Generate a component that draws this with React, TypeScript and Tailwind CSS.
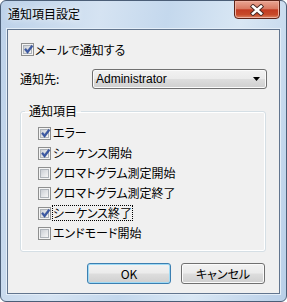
import React from 'react';

const btnBg = 'bg-[linear-gradient(#f2f2f2_0%,#ebebeb_48%,#dddddd_52%,#cfcfcf_100%)]';

const CheckBox: React.FC<{ checked?: boolean }> = ({ checked }) => (
    <span className="relative block w-[13px] h-[13px] shrink-0 border border-[#8e8f8f] bg-[#f4f4f4] p-[1px]">
        <span className="block w-full h-full border border-[#aeb3b9] bg-[linear-gradient(135deg,#cbcfd5,#f6f6f6)]" />
        {checked && (
            <svg className="absolute left-[1px] top-[0px]" width="11" height="11" viewBox="0 0 11 11">
                <path d="M1.5 5.6 L3 4.4 L4.5 6.4 L8.6 1.2 L10 2.3 L4.6 9.4 Z" fill="#3c5aa6" stroke="#1f3a82" strokeWidth="0.5" />
            </svg>
        )}
    </span>
);

const Item: React.FC<{ label: string; checked?: boolean; focused?: boolean }> = ({ label, checked, focused }) => (
    <div className="flex items-center h-[20px]">
        <CheckBox checked={checked} />
        <span className={`ml-[1px] leading-[14px] border ${focused ? 'border-dotted border-black' : 'border-transparent'}`}>{label}</span>
    </div>
);

const items = [
    { label: 'エラー', checked: true },
    { label: 'シーケンス開始', checked: true },
    { label: 'クロマトグラム測定開始', checked: false },
    { label: 'クロマトグラム測定終了', checked: false },
    { label: 'シーケンス終了', checked: true, focused: true },
    { label: 'エンドモード開始', checked: false },
];

export default function App() {
    return (
        <div className="w-[287px] h-[302px] rounded-[6px] border border-[#4b5e77] bg-[linear-gradient(100deg,#bcd1e9_0%,#d5e3f2_30%,#c4d8ed_50%,#d9e7f4_72%,#b9cfe8_100%)] flex flex-col px-[6px] pb-[7px] text-[12px] text-black [font-family:'Noto_Sans_CJK_JP','Noto_Sans',sans-serif] [font-feature-settings:'palt']">
            <div className="h-[28px] flex items-start shrink-0">
                <div className="pt-[5px] pl-[1px] leading-[16px] [text-shadow:0_0_6px_#ffffff]">通知項目設定</div>
                <div className="ml-auto -mt-[1px] w-[46px] h-[19px] rounded-b-[4px] border border-[#5c2318] bg-[linear-gradient(#e9a593_0%,#d97a63_45%,#c23b22_52%,#c74a2a_80%,#dc8766_100%)] shadow-[inset_0_0_0_1px_#eeb0a0] flex items-center justify-center">
                    <svg width="18" height="12" viewBox="0 0 18 12">
                        <path d="M5 2.5 L13 9.5 M13 2.5 L5 9.5" stroke="#4a2a24" strokeWidth="4.4" strokeLinecap="square" />
                        <path d="M5 2.5 L13 9.5 M13 2.5 L5 9.5" stroke="#ffffff" strokeWidth="2.6" strokeLinecap="square" />
                    </svg>
                </div>
            </div>
            <div className="flex-1 border border-[#62758e] bg-[#f0f0f0] shadow-[0_0_0_1px_#e4eef8] flex flex-col pl-[12px] pr-[12px]">
                <div className="flex items-center h-[13px] mt-[13px] pl-[1px]">
                    <CheckBox checked />
                    <span className="ml-[1px] leading-[14px]">メールで通知する</span>
                </div>
                <div className="flex items-center h-[20px] mt-[13px]">
                    <span className="leading-[14px]">通知先:</span>
                    <div className={`ml-auto w-[175px] h-[20px] rounded-[3px] border border-[#707070] ${btnBg} shadow-[inset_0_0_0_1px_#fbfbfb] flex items-center pl-[3px] pr-[6px]`}>
                        <span className="[font-family:'Liberation_Sans',Arial,sans-serif] leading-[14px]">Administrator</span>
                        <svg className="ml-auto" width="7" height="4" viewBox="0 0 7 4">
                            <path d="M0 0 H7 L3.5 4 Z" fill="#000" />
                        </svg>
                    </div>
                </div>
                <fieldset className="mt-[14px] mr-[1px] h-[149px] border border-[#d5dfe5] rounded-[3px] shadow-[inset_0_0_0_1px_#ffffff]">
                    <legend className="ml-[4px] px-[4px] leading-[16px]">通知項目</legend>
                    <div className="pl-[17px] pt-[4px]">
                        {items.map(it => (
                            <Item key={it.label} label={it.label} checked={it.checked} focused={it.focused} />
                        ))}
                    </div>
                </fieldset>
                <div className="flex justify-end gap-[10px] mt-[11px] mr-[2px]">
                    <button className={`w-[84px] h-[21px] rounded-[3px] border border-[#3c7fb1] ${btnBg} shadow-[inset_0_0_0_1px_#9fdaf5] leading-[14px]`}>OK</button>
                    <button className={`w-[84px] h-[21px] rounded-[3px] border border-[#707070] ${btnBg} shadow-[inset_0_0_0_1px_#fbfbfb] leading-[14px]`}>キャンセル</button>
                </div>
            </div>
        </div>
    );
}
